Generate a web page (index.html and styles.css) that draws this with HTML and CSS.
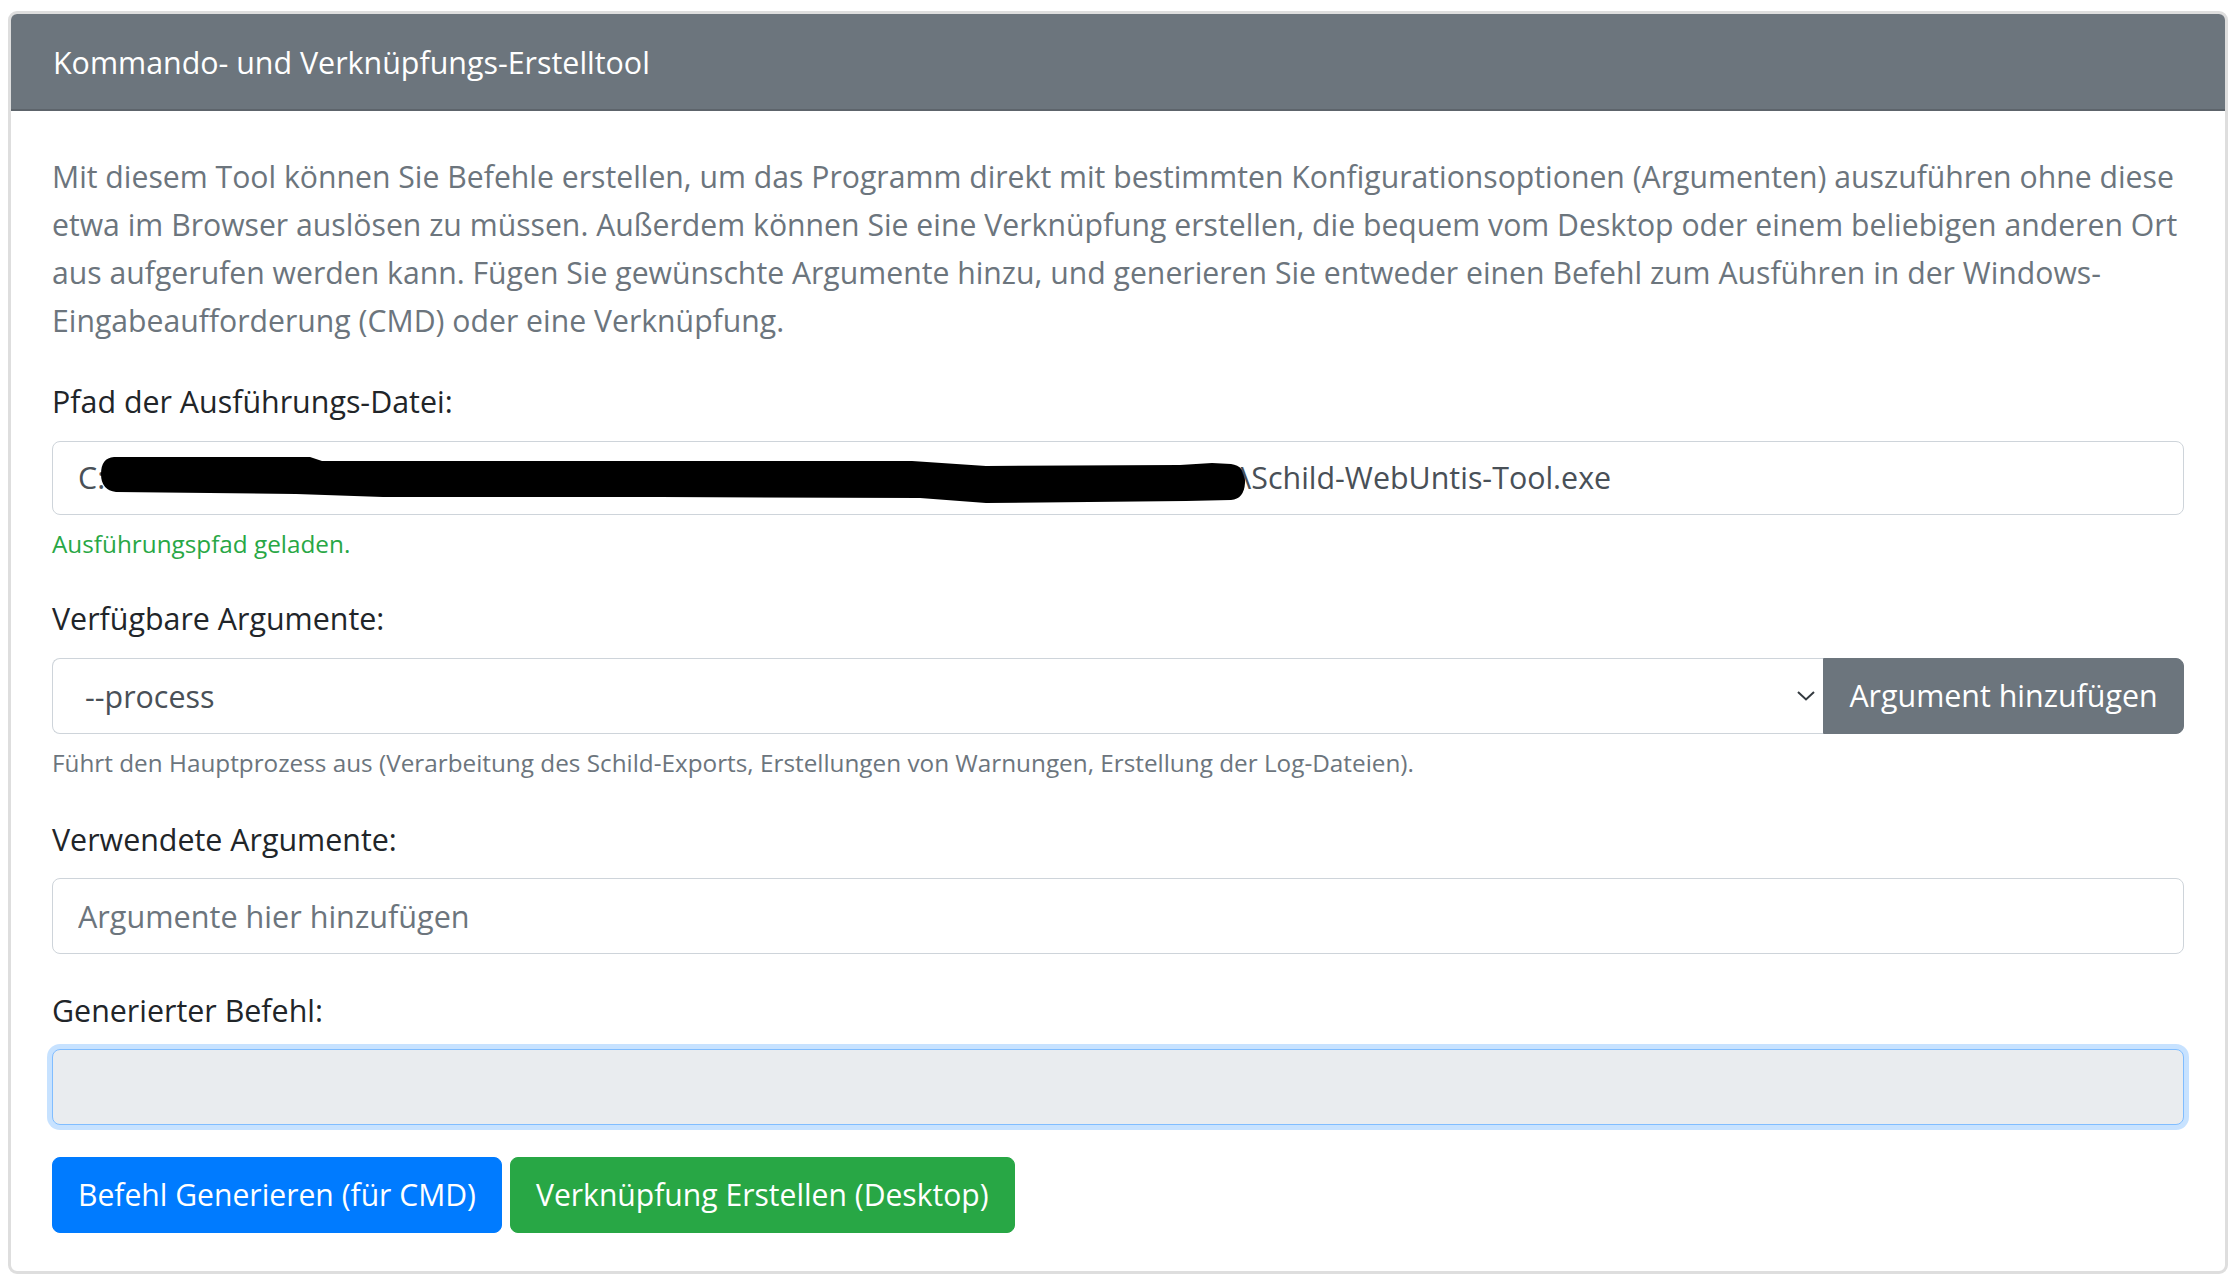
FILE: index.html
```html
<!DOCTYPE html>
<html lang="de">
<head>
<meta charset="utf-8">
<title>Kommando- und Verknüpfungs-Erstelltool</title>
<link rel="stylesheet" href="styles.css">
</head>
<body>
<div class="page">
  <div class="card">
    <div class="card-header">Kommando- und Verknüpfungs-Erstelltool</div>
    <div class="card-body">
      <p class="intro">Mit diesem Tool können Sie Befehle erstellen, um das Programm direkt mit bestimmten Konfigurationsoptionen (Argumenten) auszuführen ohne diese<br>etwa im Browser auslösen zu müssen. Außerdem können Sie eine Verknüpfung erstellen, die bequem vom Desktop oder einem beliebigen anderen Ort<br>aus aufgerufen werden kann. Fügen Sie gewünschte Argumente hinzu, und generieren Sie entweder einen Befehl zum Ausführen in der Windows-<br>Eingabeaufforderung (CMD) oder eine Verknüpfung.</p>

      <div class="form-group">
        <label class="label">Pfad der Ausführungs-Datei:</label>
        <div class="control path-control"><span>C:</span><span class="redact"><svg class="redact-svg" width="1148" height="50" viewBox="0 0 1148 50"><path d="M14,1 L210,1 L222,5 L560,5 L812,5 L886,10 L1080,9 L1112,7 L1131,8 Q1146,10 1145,27 Q1144,43 1131,44 L1086,45 L886,47 L820,42 L560,41 L283,41 L196,38 L16,36 Q1,34 1,18 Q1,2 14,1 Z" fill="#000"/></svg></span><span>\Schild-WebUntis-Tool.exe</span></div>
        <div class="feedback-ok">Ausführungspfad geladen.</div>
      </div>

      <div class="form-group form-group-help">
        <label class="label">Verfügbare Argumente:</label>
        <div class="input-group">
          <div class="select"><span>--process</span><svg class="chev" width="18" height="10" viewBox="0 0 18 10"><path d="M1 1 L9 8.5 L17 1" fill="none" stroke="#343a40" stroke-width="2"/></svg></div>
          <button class="btn btn-secondary btn-append">Argument hinzufügen</button>
        </div>
        <div class="help">Führt den Hauptprozess aus (Verarbeitung des Schild-Exports, Erstellungen von Warnungen, Erstellung der Log-Dateien).</div>
      </div>

      <div class="form-group">
        <label class="label">Verwendete Argumente:</label>
        <input class="control" type="text" placeholder="Argumente hier hinzufügen">
      </div>

      <div class="form-group form-group-generated">
        <label class="label">Generierter Befehl:</label>
        <div class="control generated"></div>
      </div>

      <div class="actions">
        <button class="btn btn-primary">Befehl Generieren (für CMD)</button>
        <button class="btn btn-success">Verknüpfung Erstellen (Desktop)</button>
      </div>
    </div>
  </div>
</div>
</body>
</html>
```
FILE: styles.css
```css
* { box-sizing: border-box; }
html, body { margin: 0; padding: 0; background: #fff; }
body {
  font-family: "Segoe UI", "Open Sans", "Noto Sans", sans-serif;
  font-size: 30.4px;
  line-height: 45px;
  color: #212529;
}
.page {
  padding: 11px 2px 0 8px;
}
.card {
  border: 3px solid #dedede;
  border-radius: 9px;
  overflow: hidden;
  background: #fff;
  height: 1263px;
}
.card-header {
  background: #6c757d;
  color: #fff;
  padding: 26px 42px 24px 42px;
  border-bottom: 2px solid #5d646b;
  height: 97px;
  font-size: 30.4px;
}
.card-body {
  padding: 42px 41px 38px 41px;
}
.intro {
  margin: 0 0 34px 0;
  color: #6c757d;
  font-weight: 400;
  font-size: 30.2px;
  line-height: 48px;
  white-space: nowrap;
}
.form-group {
  margin-bottom: 34px;
}
.form-group-help { margin-bottom: 36px; }
.label {
  display: block;
  margin-bottom: 17px;
  color: #212529;
}
.form-group-generated .label { margin-bottom: 16px; }
.control {
  display: block;
  width: 100%;
  height: 74px;
  padding: 13px 25px;
  font: inherit;
  font-size: 30.6px;
  line-height: 46px;
  color: #495057;
  background: #fff;
  border: 1px solid #ced4da;
  border-radius: 8px;
  outline: none;
}
.control::placeholder { color: #6c757d; opacity: 1; }
.path-control {
  display: flex;
  align-items: center;
  white-space: nowrap;
  font-size: 30.4px;
}
.redact {
  display: inline-block;
  width: 1140px;
  height: 46px;
  margin-left: -5px;
  flex: none;
}
.redact-svg { display: block; margin-top: 1px; }
.feedback-ok {
  margin-top: 11px;
  font-size: 24.3px;
  line-height: 36px;
  color: #28a745;
}
.input-group {
  display: flex;
  height: 76px;
}
.select {
  flex: 1;
  display: flex;
  align-items: center;
  justify-content: space-between;
  padding: 0 8px 0 32px;
  border: 1px solid #ced4da;
  border-right: none;
  border-radius: 8px 0 0 8px;
  color: #495057;
  background: #fff;
}
.chev { display: block; }
.btn {
  font: inherit;
  font-size: 30.1px;
  line-height: 46px;
  padding: 14px 25px;
  border: 1px solid transparent;
  border-radius: 8px;
  color: #fff;
  cursor: pointer;
  white-space: nowrap;
}
.btn-secondary { background: #6c757d; border-color: #6c757d; }
.btn-append {
  width: 361px;
  font-size: 30.4px;
  border-radius: 0 8px 8px 0;
}
.btn-primary { background: #007bff; border-color: #007bff; }
.btn-success { background: #28a745; border-color: #28a745; }
.help {
  margin-top: 11px;
  font-size: 24.3px;
  line-height: 36px;
  color: #6c757d;
}
input.control { height: 76px; }
.form-group input.control { margin-top: -1px; }
.generated {
  height: 76px;
  background: #e9ecef;
  border-color: #80bdff;
  box-shadow: 0 0 0 5px rgba(0, 123, 255, 0.22);
}
.actions {
  display: flex;
  gap: 8px;
  margin-top: -2px;
}
```
